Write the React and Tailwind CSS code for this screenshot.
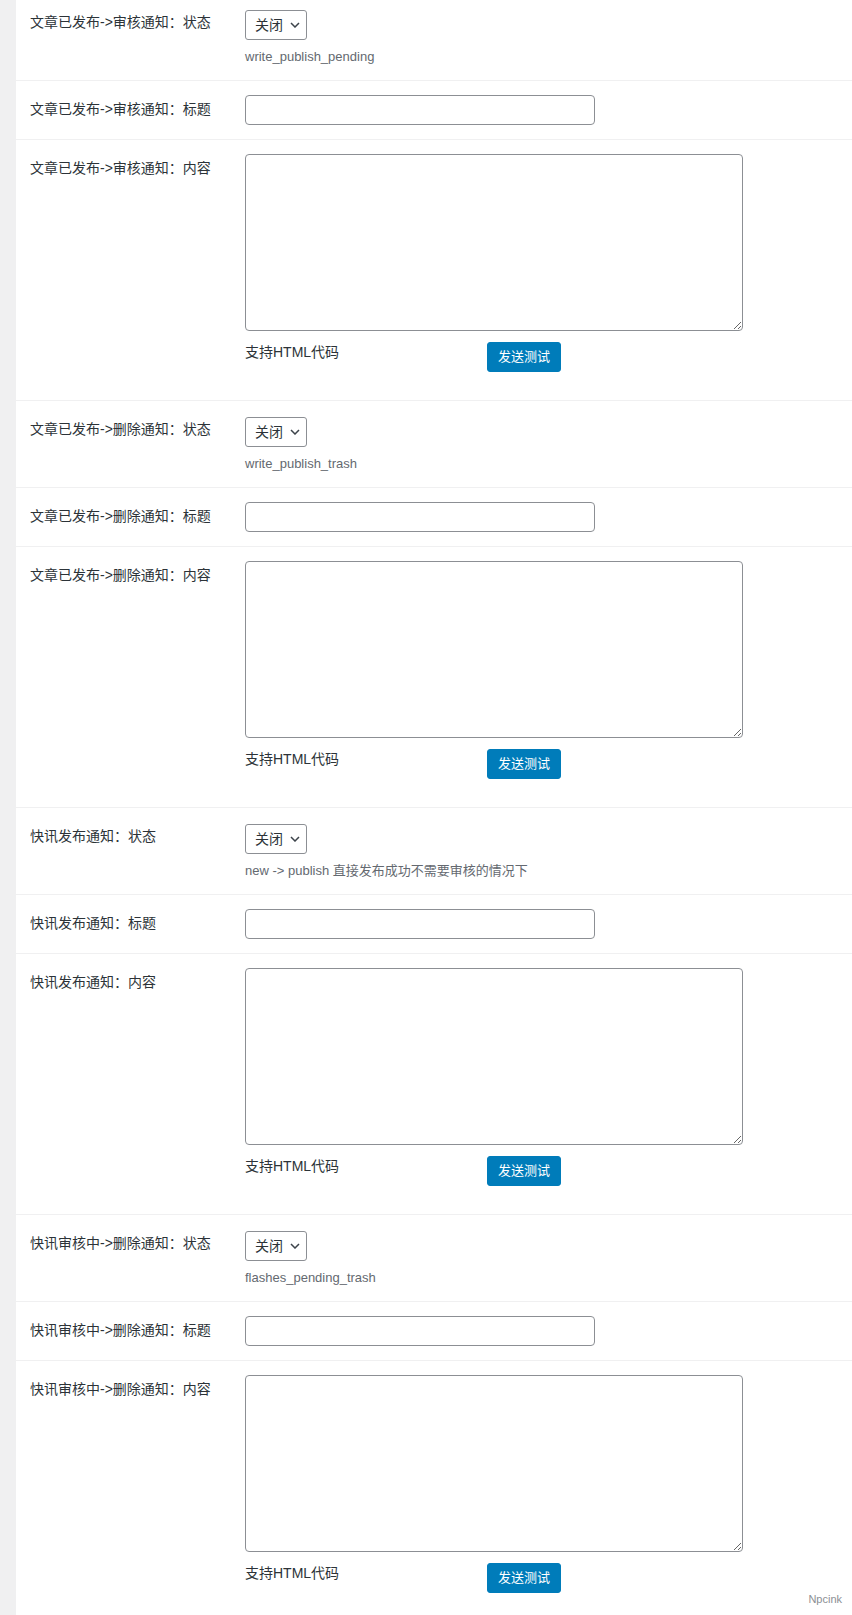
const FONT = "font-['Liberation_Sans','Noto_Sans_CJK_SC',sans-serif]";

const groups = [
  { prefix: "文章已发布->审核通知：", desc: "write_publish_pending" },
  { prefix: "文章已发布->删除通知：", desc: "write_publish_trash" },
  { prefix: "快讯发布通知：", desc: "new -> publish 直接发布成功不需要审核的情况下" },
  { prefix: "快讯审核中->删除通知：", desc: "flashes_pending_trash" },
];

function Label({ children }) {
  return (
    <div className="w-[229px] shrink-0 pl-[14px] pt-[19px] text-[14px] leading-[18px] text-[#2c3338]">
      {children}
    </div>
  );
}

function StatusRow({ label, desc }) {
  return (
    <div className="flex h-[87px] border-b border-[#f0f0f1]">
      <Label>{label}</Label>
      <div className="pt-[16px]">
        <div className="flex h-[30px] w-[62px] items-center rounded-[3px] border border-[#8c8f94] bg-white pl-[9px] text-[14px] text-[#2c3338]">
          <span className="leading-[18px]">关闭</span>
          <svg className="ml-[7px]" width="10" height="6" viewBox="0 0 10 6" fill="none">
            <path d="M1 1l4 4 4-4" stroke="#3c434a" strokeWidth="1.5" />
          </svg>
        </div>
        <p className="mt-[7px] text-[13px] leading-[19px] text-[#646970]">{desc}</p>
      </div>
    </div>
  );
}

function TitleRow({ label }) {
  return (
    <div className="flex h-[59px] border-b border-[#f0f0f1]">
      <Label>{label}</Label>
      <div className="pt-[14px]">
        <input
          type="text"
          className="block h-[30px] w-[350px] rounded-[4px] border border-[#8c8f94] bg-white px-2 text-[14px] outline-none"
        />
      </div>
    </div>
  );
}

function ContentRow({ label }) {
  return (
    <div className="flex h-[261px] border-b border-[#f0f0f1]">
      <Label>{label}</Label>
      <div className="pt-[14px]">
        <textarea className="block h-[177px] w-[498px] rounded-[4px] border border-[#8c8f94] bg-white p-2 text-[14px] outline-none" />
        <div className="mt-[11px] flex items-start">
          <span className="mt-[1px] w-[242px] text-[14px] leading-[18px] text-[#2c3338]">支持HTML代码</span>
          <button className="h-[30px] rounded-[3px] border border-[#007cba] bg-[#007cba] px-[10px] text-[13px] leading-[28px] text-white">
            发送测试
          </button>
        </div>
      </div>
    </div>
  );
}

export default function App() {
  return (
    <div className={`relative flex h-[1615px] overflow-hidden bg-white ${FONT}`}>
      <div className="w-4 shrink-0 bg-[#f0f0f1]" />
      <div className="-mt-[6px] flex-1">
        {groups.map((g) => (
          <div key={g.prefix}>
            <StatusRow label={g.prefix + "状态"} desc={g.desc} />
            <TitleRow label={g.prefix + "标题"} />
            <ContentRow label={g.prefix + "内容"} />
          </div>
        ))}
      </div>
      <span className="absolute bottom-[9px] right-[10px] text-[11px] leading-[14px] text-[#8c8f94]">Npcink</span>
    </div>
  );
}
